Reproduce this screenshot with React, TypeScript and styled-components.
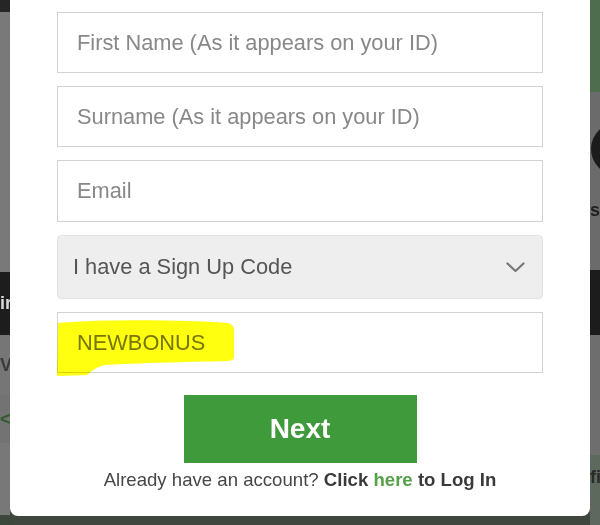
import React from "react";
import styled, { createGlobalStyle } from "styled-components";

const Global = createGlobalStyle`
  html, body { margin: 0; padding: 0; background: #6f6f6f; }
  body { font-family: "Liberation Sans", Arial, sans-serif; }
  * { box-sizing: border-box; }
`;

const Page = styled.div`
  display: flex;
  width: 600px;
  height: 525px;
  overflow: hidden;
`;

const Strip = styled.div`
  width: 10px;
  flex: 0 0 10px;
  display: flex;
  flex-direction: column;
  overflow: hidden;
`;

const Band = styled.div<{ $h: number; $bg: string }>`
  height: ${(p) => p.$h}px;
  flex: 0 0 ${(p) => p.$h}px;
  background: ${(p) => p.$bg};
  display: flex;
  align-items: center;
  overflow: hidden;
  white-space: nowrap;
  font-family: "Liberation Sans", Arial, sans-serif;
  font-weight: 700;
  font-size: 18px;
`;

const Frag = styled.span<{ $c: string }>`
  color: ${(p) => p.$c};
`;

const Disc = styled.div`
  width: 52px;
  height: 52px;
  flex: 0 0 52px;
  border-radius: 50%;
  background: #1b1b1b;
  margin-left: 1px;
`;

const Center = styled.div`
  width: 580px;
  flex: 0 0 580px;
  display: flex;
  flex-direction: column;
  background: #3f473f;
`;

const Modal = styled.div`
  height: 516px;
  flex: 0 0 516px;
  background: #ffffff;
  border-radius: 0 0 8px 8px;
  display: flex;
  flex-direction: column;
  align-items: center;
  padding-top: 12px;
`;

const Fields = styled.div`
  width: 486px;
  display: flex;
  flex-direction: column;
  gap: 13px;
`;

const TextInput = styled.input<{ $h?: number }>`
  width: 100%;
  height: ${(p) => p.$h || 61}px;
  border: 1px solid #d2d2d2;
  background: #fff;
  padding: 0 19px;
  font-family: "Liberation Sans", Arial, sans-serif;
  font-size: 21.8px;
  color: #777777;
  outline: none;
  &::placeholder {
    color: #888888;
    opacity: 1;
  }
`;

const SelectBox = styled.div`
  width: 100%;
  height: 64px;
  border: 1px solid #e2e2e2;
  border-radius: 4px;
  background: #eeeeee;
  display: flex;
  align-items: center;
  justify-content: space-between;
  padding: 0 17px 0 15px;
  font-size: 21.8px;
  color: #555555;
`;

const CodeField = styled.div`
  position: relative;
  width: 100%;
`;

const Highlight = styled.svg`
  position: absolute;
  left: 0;
  top: 0;
  width: 180px;
  height: 66px;
  pointer-events: none;
  mix-blend-mode: multiply;
  overflow: visible;
`;

const NextButton = styled.button`
  margin-top: 22px;
  width: 233px;
  height: 68px;
  border: none;
  background: #3f9a3b;
  color: #ffffff;
  font-family: "Liberation Sans", Arial, sans-serif;
  font-weight: 700;
  font-size: 28px;
  cursor: pointer;
`;

const Footer = styled.p`
  margin: 6px 0 0;
  line-height: 22px;
  font-size: 18.6px;
  color: #474747;
`;

const Strong = styled.b`
  font-weight: 700;
  color: #3a3a3a;
`;

const Link = styled.a`
  font-weight: 700;
  color: #55a048;
  text-decoration: none;
`;

const Chevron = () => (
  <svg width="19" height="11" viewBox="0 0 19 11">
    <polyline
      points="1.5,1.5 9.5,9 17.5,1.5"
      fill="none"
      stroke="#777"
      strokeWidth="2.2"
      strokeLinecap="round"
      strokeLinejoin="round"
    />
  </svg>
);

export default function App() {
  return (
    <>
      <Global />
      <Page>
        <Strip>
          <Band $h={12} $bg="#262626" />
          <Band $h={260} $bg="#797979" />
          <Band $h={63} $bg="#1d1d1d">
            <Frag $c="#d8d8d8">ir</Frag>
          </Band>
          <Band $h={60} $bg="#767676">
            <Frag $c="#3a3a3a">VI</Frag>
          </Band>
          <Band $h={48} $bg="#737373">
            <Frag $c="#2f5a2f">&lt;</Frag>
          </Band>
          <Band $h={72} $bg="#787878" />
          <Band $h={10} $bg="#3d483d" />
        </Strip>
        <Center>
          <Modal>
            <Fields>
              <TextInput placeholder="First Name (As it appears on your ID)" />
              <TextInput placeholder="Surname (As it appears on your ID)" />
              <TextInput placeholder="Email" $h={62} />
              <SelectBox>
                <span>I have a Sign Up Code</span>
                <Chevron />
              </SelectBox>
              <CodeField>
                <TextInput defaultValue="NEWBONUS" />
                <Highlight viewBox="0 0 180 66">
                  <path
                    d="M1 11 C 50 7, 130 8, 170 11 Q 177 12 177 18 L 177 45 Q 177 49 170 49 C 130 50, 80 51, 48 53 C 38 55, 34 60, 30 63 L 0 64 Z"
                    fill="#ffff10"
                  />
                </Highlight>
              </CodeField>
            </Fields>
            <NextButton>Next</NextButton>
            <Footer>
              Already have an account? <Strong>Click</Strong>{" "}
              <Link href="#">here</Link> <Strong>to Log In</Strong>
            </Footer>
          </Modal>
        </Center>
        <Strip>
          <Band $h={92} $bg="#4e6c4e" />
          <Band $h={26} $bg="#6b6b6b" />
          <Band $h={62} $bg="#6b6b6b">
            <Disc />
          </Band>
          <Band $h={60} $bg="#6b6b6b">
            <Frag $c="#1f1f1f">s</Frag>
          </Band>
          <Band $h={30} $bg="#6b6b6b" />
          <Band $h={65} $bg="#1c1c1c" />
          <Band $h={120} $bg="#6e6e6e" />
          <Band $h={45} $bg="#5c695c">
            <Frag $c="#2a2a2a">fi</Frag>
          </Band>
          <Band $h={25} $bg="#5f685f" />
        </Strip>
      </Page>
    </>
  );
}
